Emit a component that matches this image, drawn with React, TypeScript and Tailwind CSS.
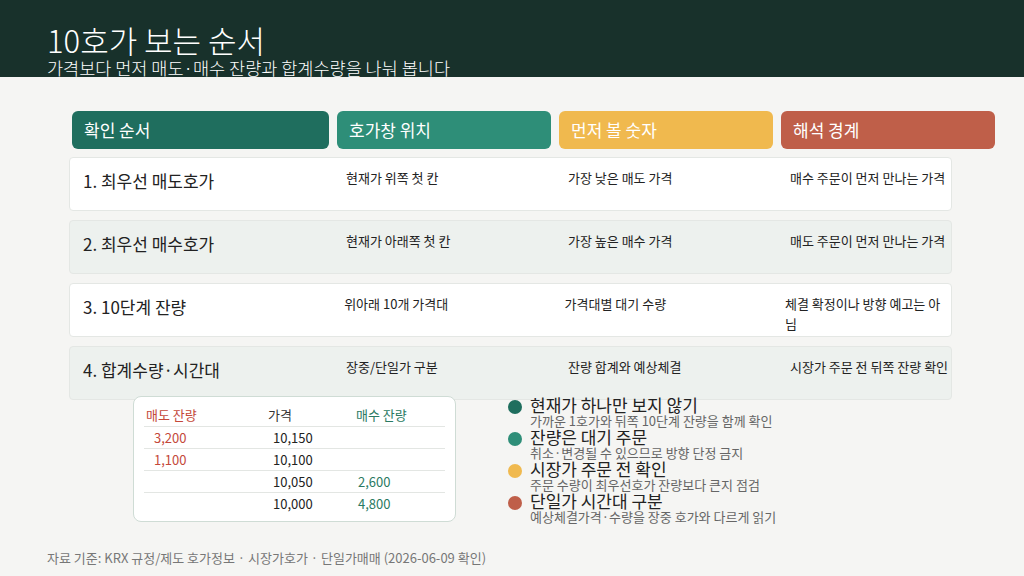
const font = { fontFamily: '"Noto Sans CJK KR", "Noto Sans", sans-serif' };

const heads = [
  { t: '확인 순서', c: 'bg-[#1f6e5e] text-white', w: 'w-[257px]' },
  { t: '호가창 위치', c: 'bg-[#2e8e78] text-white', w: 'w-[214px]' },
  { t: '먼저 볼 숫자', c: 'bg-[#f0b94e] text-white', w: 'w-[214px]' },
  { t: '해석 경계', c: 'bg-[#bf5f49] text-white', w: 'w-[214px]' },
];

const rows = [
  ['1. 최우선 매도호가', '현재가 위쪽 첫 칸', '가장 낮은 매도 가격', '매수 주문이 먼저 만나는 가격'],
  ['2. 최우선 매수호가', '현재가 아래쪽 첫 칸', '가장 높은 매수 가격', '매도 주문이 먼저 만나는 가격'],
  ['3. 10단계 잔량', '위아래 10개 가격대', '가격대별 대기 수량', '체결 확정이나 방향 예고는 아님'],
  ['4. 합계수량·시간대', '장중/단일가 구분', '잔량 합계와 예상체결', '시장가 주문 전 뒤쪽 잔량 확인'],
];

const book = [
  ['3,200', '10,150', ''],
  ['1,100', '10,100', ''],
  ['', '10,050', '2,600'],
  ['', '10,000', '4,800'],
];

const notes = [
  ['bg-[#1f6e5e]', '현재가 하나만 보지 않기', '가까운 1호가와 뒤쪽 10단계 잔량을 함께 확인'],
  ['bg-[#2e8e78]', '잔량은 대기 주문', '취소·변경될 수 있으므로 방향 단정 금지'],
  ['bg-[#f0b94e]', '시장가 주문 전 확인', '주문 수량이 최우선호가 잔량보다 큰지 점검'],
  ['bg-[#bf5f49]', '단일가 시간대 구분', '예상체결가격·수량을 장중 호가와 다르게 읽기'],
];

export default function App() {
  return (
    <div style={font} className="w-[1024px] h-[576px] bg-[#f5f5f3] overflow-hidden relative">
      <div className="h-[77px] bg-[#18312b] px-[47px] pt-[22px]">
        <div className="text-[31px] leading-[36px] font-light text-white">10호가 보는 순서</div>
        <div className="text-[17.5px] leading-[20px] font-light text-white">가격보다 먼저 매도·매수 잔량과 합계수량을 나눠 봅니다</div>
      </div>

      <div className="pl-[72px] pt-[34px]">
        <div className="flex gap-[8px]">
          {heads.map((h) => (
            <div key={h.t} className={`${h.c} ${h.w} h-[38px] rounded-[6px] flex items-center px-[12px] text-[17px]`}>{h.t}</div>
          ))}
        </div>
        <div className="-ml-[3px] mt-[8px] flex flex-col gap-[9px] w-[883px]">
          {rows.map((r, i) => (
            <div key={i} className={`h-[54px] rounded-[4px] border border-[#e4e7e4] flex pt-[10px] text-[#222] ${i % 2 ? 'bg-[#edf1ee]' : 'bg-white'}`}>
              <div className="w-[276px] pl-[13px] text-[17px] leading-[26px]">{r[0]}</div>
              <div className="w-[222px] text-[13px] leading-[20px]">{r[1]}</div>
              <div className="w-[222px] text-[13px] leading-[20px]">{r[2]}</div>
              <div className="text-[13px] leading-[20px]">{r[3]}</div>
            </div>
          ))}
        </div>
      </div>

      <div className="flex mt-[-4px]">
        <div className="ml-[133px] w-[323px] h-[126px] bg-white border border-[#cfdcd5] rounded-[8px] px-[10px] pt-[8px] text-[13px]">
          <div className="flex h-[22px] border-b border-[#e3e6e3]">
            <div className="w-[124px] pl-[2px] text-[#c4483a]">매도 잔량</div>
            <div className="w-[88px] text-[#333]">가격</div>
            <div className="text-[#2a7a62]">매수 잔량</div>
          </div>
          {book.map((b, i) => (
            <div key={i} className={`flex h-[22px] items-center ${i < 3 ? 'border-b border-[#e3e6e3]' : ''}`}>
              <div className="w-[129px] pl-[10px] text-[#c4483a]">{b[0]}</div>
              <div className="w-[83px] text-[#222]">{b[1]}</div>
              <div className="pl-[2px] text-[#2a7a62]">{b[2]}</div>
            </div>
          ))}
        </div>
        <div className="ml-[52px] flex flex-col">
          {notes.map((n) => (
            <div key={n[1]} className="flex gap-[8px] h-[32px]">
              <div className={`${n[0]} w-[14px] h-[14px] rounded-full mt-[4px]`} />
              <div>
                <div className="text-[17px] leading-[18px] text-[#222]">{n[1]}</div>
                <div className="text-[13px] leading-[14px] text-[#666]">{n[2]}</div>
              </div>
            </div>
          ))}
        </div>
      </div>

      <div className="absolute left-[47px] top-[548px] text-[13px] text-[#777]">자료 기준: KRX 규정/제도 호가정보 · 시장가호가 · 단일가매매 (2026-06-09 확인)</div>
    </div>
  );
}
